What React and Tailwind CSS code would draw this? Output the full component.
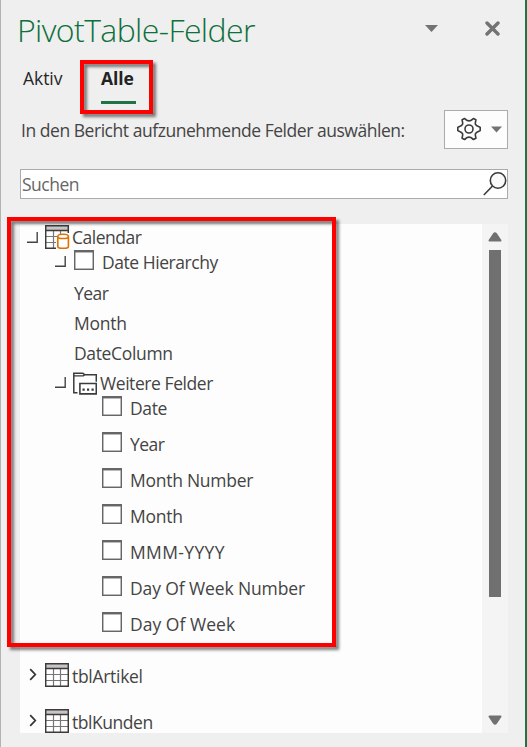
const baseFields = [
  { name: "Year", tracking: "tracking-[-0.55px]" },
  { name: "Month", tracking: "tracking-[-0.25px]" },
  { name: "DateColumn", tracking: "tracking-[-0.35px]" },
];

const moreFields = [
  { name: "Date", tracking: "tracking-[-0.35px]" },
  { name: "Year", tracking: "tracking-[-0.55px]" },
  { name: "Month Number", tracking: "tracking-[-0.26px]" },
  { name: "Month", tracking: "tracking-[-0.25px]" },
  { name: "MMM-YYYY", tracking: "tracking-[0.35px]" },
  { name: "Day Of Week Number", tracking: "tracking-[-0.12px]" },
  { name: "Day Of Week", tracking: "tracking-[0.03px]" },
];

const tables = [
  { name: "tblArtikel", tracking: "tracking-[-0.3px]" },
  { name: "tblKunden", tracking: "tracking-[-0.45px]" },
];

const CaretDown = ({ className }) => (
  <svg className={className} width="13" height="7" viewBox="0 0 13 7">
    <path d="M0 0h13L6.5 7z" fill="#737373" />
  </svg>
);

const Expanded = ({ className = "" }) => (
  <svg className={`shrink-0 ${className}`} width="11" height="11" viewBox="0 0 11 11" fill="none">
    <path d="M10.2 0v10.2H0" stroke="#444" strokeWidth="1.4" />
  </svg>
);

const Collapsed = () => (
  <svg className="shrink-0" width="8" height="13" viewBox="0 0 8 13" fill="none">
    <path d="M1.2 1.2 6.3 6.5 1.2 11.8" stroke="#333" strokeWidth="1.7" />
  </svg>
);

const Checkbox = () => (
  <span className="block h-5 w-5 shrink-0 border border-t-2 border-[#666] bg-white shadow-[inset_0_0_0_0.5px_#777]" />
);

const TableIcon = () => (
  <svg className="shrink-0" width="24" height="24" viewBox="0 0 24 24" fill="none">
    <path d="M1 1h22v22H1z" fill="#fff" />
    <path d="M1 1h22v4.5H1z" fill="#c8c6c4" />
    <path d="M8.5 6v17M15.5 6v17M1 11.5h22M1 17.5h22" stroke="#777" strokeWidth="1.2" />
    <path d="M.7.7h22.6v22.6H.7zM.7 5.5h22.6" stroke="#3b3b3b" strokeWidth="1.5" />
  </svg>
);

const DataTableIcon = () => (
  <svg className="shrink-0" width="25" height="24" viewBox="0 0 25 24" fill="none">
    <path d="M1 1h22v4.5H1z" fill="#c8c6c4" />
    <path d="M8.5 6v17M15.5 6v3M1 11.5h11M1 17.5h10" stroke="#777" strokeWidth="1.2" />
    <path d="M23.3 8V.7H.7v22.6H11M.7 5.5h22.6" stroke="#3b3b3b" strokeWidth="1.5" />
    <path
      d="M12.8 11.7v9.8c0 1.1 2.4 1.9 5.3 1.9s5.3-.8 5.3-1.9v-9.8"
      fill="#fff"
      stroke="#e07000"
      strokeWidth="1.6"
    />
    <ellipse cx="18.1" cy="11.4" rx="5.3" ry="2.1" fill="#fff" stroke="#e07000" strokeWidth="1.6" />
  </svg>
);

const FolderIcon = () => (
  <svg className="shrink-0" width="24" height="23" viewBox="0 0 24 23" fill="none">
    <path d="M4.5 20.8H.8V1.2h9l1.8 1.5h11.7v7" stroke="#3b3b3b" strokeWidth="1.5" />
    <path d="M1 3.8h9.3l1.3-1.1" stroke="#3b3b3b" strokeWidth="1.3" />
    <path d="M6.9 11.5h16.4v10.4H6.9z" fill="#fff" stroke="#3b3b3b" strokeWidth="1.6" />
    <path d="M9.5 16.6h2.2v2.2H9.5zM14 16.6h2.2v2.2H14zM18.5 16.6h2.2v2.2h-2.2z" fill="#3b3b3b" />
  </svg>
);

const GearIcon = () => (
  <svg width="24" height="24" viewBox="0 0 24 24" fill="none" stroke="#3b3b3b" strokeWidth="1.6" strokeLinejoin="round">
    <path d="M7.6 1.5C8.8 2 9 3.9 12 3.9S15.2 2 16.4 1.5L18.9 2.8C19 4.2 17.7 5.6 18.5 7.4S21.9 9.7 23.2 10.4V13.6C21.9 14.3 19.3 14.8 18.5 16.6S19 19.8 18.9 21.2L16.4 22.5C15.2 22 15 20.1 12 20.1S8.8 22 7.6 22.5L5.1 21.2C5 19.8 6.3 18.4 5.5 16.6S2.1 14.3.8 13.6V10.4C2.1 9.7 4.7 9.2 5.5 7.4S5 4.2 5.1 2.8z" />
    <circle cx="12" cy="12" r="4" />
  </svg>
);

const Marker = ({ className }) => (
  <div
    className={`pointer-events-none absolute border-4 border-[#ff0000] drop-shadow-[3px_3px_1.5px_rgba(0,0,0,0.5)] ${className}`}
  />
);

export default function App() {
  return (
    <div className="relative flex h-[747px] w-[527px] flex-col overflow-hidden border-r-2 border-l border-r-[#217346] border-l-[#b3b3b3] bg-[#efefef] pr-[17px] pl-[19px] font-['Open_Sans',sans-serif] text-[17.5px] leading-6 text-[#444]">
      {/* Title bar */}
      <div className="flex h-[60px] shrink-0 items-center">
        <h1 className="-ml-[3px] flex-1 pb-px text-[32px] font-light leading-[58px] tracking-[-0.6px] text-[#0e703c]">
          PivotTable-Felder
        </h1>
        <CaretDown className="mr-[47px] mb-1" />
        <svg className="mr-2 mb-1" width="15" height="15" viewBox="0 0 15 15">
          <path d="M2 2l11 11M13 2 2 13" stroke="#737373" strokeWidth="3.4" strokeLinecap="round" />
        </svg>
      </div>

      {/* Tabs */}
      <div className="flex h-[50px] shrink-0 items-start pt-[6px] pl-[3px]">
        <span className="w-[78px] tracking-[-0.05px] text-[#262626]">Aktiv</span>
        <div className="flex h-[38px] w-[35px] flex-col justify-between border-b-[3px] border-[#217346]">
          <span className="font-bold tracking-[-0.1px] text-[#222]">Alle</span>
        </div>
      </div>

      <div className="flex h-[39px] shrink-0 items-center justify-between">
        <span className="whitespace-nowrap pt-px pl-px tracking-[-0.46px]">
          In den Bericht aufzunehmende Felder auswählen:
        </span>
        <button className="flex h-[39px] w-16 items-center justify-between border border-[#ababab] bg-[#fdfdfd] pr-[5px] pb-px pl-3">
          <GearIcon />
          <CaretDown className="w-[11px]" />
        </button>
      </div>

      {/* Search */}
      <div className="mt-5 flex h-[30px] shrink-0 items-center justify-between border border-[#ababab] bg-white">
        <span className="pb-px pl-px tracking-[-0.5px] text-[#666]">Suchen</span>
        <svg width="24" height="26" viewBox="0 0 24 26" fill="none" stroke="#3b3b3b" strokeWidth="1.6">
          <circle cx="15" cy="9.5" r="7.7" fill="#fafafa" />
          <path d="M9.5 15 .8 24" />
        </svg>
      </div>

      {/* Field list */}
      <div className="mt-[25px] flex h-[509px] shrink-0 overflow-hidden bg-[#fdfdfd]">
        <div className="flex-1">
          <div className="flex h-[26px] items-center pl-[7px]">
            <Expanded className="mr-[7px]" />
            <DataTableIcon />
            <span className="ml-[2px] tracking-[-0.5px]">Calendar</span>
          </div>
          <div className="flex h-[26px] items-center pl-[35px]">
            <Expanded className="mr-2 mb-1" />
            <div className="mb-[6px]">
              <Checkbox />
            </div>
            <span className="ml-2 pb-[2px] tracking-[-0.45px]">Date Hierarchy</span>
          </div>
          <div className="mt-[3px]">
            {baseFields.map((field) => (
              <div key={field.name} className={`flex h-[30px] items-center pb-[2px] pl-[54px] ${field.tracking}`}>
                {field.name}
              </div>
            ))}
          </div>
          <div className="flex h-[30px] items-center pl-[35px]">
            <Expanded className="mr-[7px] mb-1" />
            <div className="mb-[2px]">
              <FolderIcon />
            </div>
            <span className="ml-[3px] pb-[2px] tracking-[-0.43px]">Weitere Felder</span>
          </div>
          <div className="-mt-2">
            {moreFields.map((field) => (
              <div key={field.name} className="flex h-9 items-center pl-[82px]">
                <div className="mb-[6px]">
                  <Checkbox />
                </div>
                <span className={`ml-2 pb-[2px] ${field.tracking}`}>{field.name}</span>
              </div>
            ))}
          </div>
          <div className="mt-[11px]">
            {tables.map((table) => (
              <div key={table.name} className="flex h-[46px] items-center pl-[9px]">
                <div className="mr-2 mb-[5px]">
                  <Collapsed />
                </div>
                <div className="mb-1">
                  <TableIcon />
                </div>
                <span className={`ml-[3px] pb-[2px] leading-5 ${table.tracking}`}>{table.name}</span>
              </div>
            ))}
          </div>
        </div>

        {/* Scrollbar */}
        <div className="flex w-[26px] flex-col items-center bg-[#f4f4f4] pt-2 pb-2">
          <svg width="14" height="10" viewBox="0 0 14 10">
            <path d="M1.5 8.5h11L8 1.8q-1-1.2-2 0z" fill="#707070" stroke="#707070" strokeWidth="2" strokeLinejoin="round" />
          </svg>
          <div className="mt-2 h-[347px] w-3 bg-[#707070]" />
          <svg className="mt-auto" width="14" height="10" viewBox="0 0 14 10">
            <path d="M1.5 1.5h11L8 8.2q-1 1.2-2 0z" fill="#707070" stroke="#707070" strokeWidth="2" strokeLinejoin="round" />
          </svg>
        </div>
      </div>

      <Marker className="top-[60px] left-[79px] h-[54px] w-[73px]" />
      <Marker className="top-[217px] left-[6px] h-[430px] w-[329px]" />
    </div>
  );
}
